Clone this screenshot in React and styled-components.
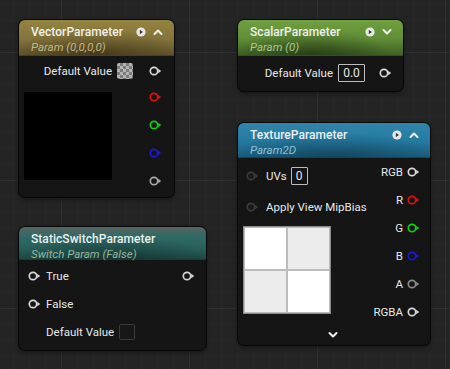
import React from "react";
import styled, { createGlobalStyle } from "styled-components";

const GlobalStyle = createGlobalStyle`
	html, body {
		margin: 0;
		padding: 0;
		background: #242424;
	}
	* {
		box-sizing: border-box;
	}
`;

const Pin = ({ color = "#d8d8d8", dim = false }) => (
	<PinSvg width="14" height="10" viewBox="0 0 14 10">
		<circle
			cx="5"
			cy="5"
			r="3.7"
			fill={dim ? "#1a1a1a" : "none"}
			stroke={color}
			strokeWidth="1.7"
		/>
		<polygon points="9.2,2.8 12.2,5 9.2,7.2" fill={color} />
	</PinSvg>
);

const PlayIcon = () => (
	<svg width="10" height="10" viewBox="0 0 10 10">
		<circle cx="5" cy="5" r="4.6" fill="#e8e8e8" />
		<polygon points="3.8,2.8 7,5 3.8,7.2" fill="#3a3a3a" />
	</svg>
);

const Chevron = ({ up }) => (
	<svg width="10" height="8" viewBox="0 0 10 8">
		<polyline
			points={up ? "1.5,6 5,2.5 8.5,6" : "1.5,2 5,5.5 8.5,2"}
			fill="none"
			stroke="#f0f0f0"
			strokeWidth="2"
			strokeLinecap="round"
			strokeLinejoin="round"
		/>
	</svg>
);

const Header = ({ title, sub, variant, icons, up }) => (
	<StHeader $variant={variant}>
		<StTitleRow>
			<StTitle>{title}</StTitle>
			{icons && (
				<StHeaderIcons>
					<PlayIcon />
					<Chevron up={up} />
				</StHeaderIcons>
			)}
		</StTitleRow>
		<StSub $variant={variant}>{sub}</StSub>
	</StHeader>
);

const App = () => {
	return (
		<StCanvas>
			<GlobalStyle />

			<StNode $x={19} $y={20} $w={155} $h={177}>
				<Header title="VectorParameter" sub="Param (0,0,0,0)" variant="vector" icons up />
				<StBody>
					<StRow $h={24} $justify="flex-end" $pr={11}>
						<StLabel>Default Value</StLabel>
						<StSwatch />
						<StPinGap />
						<Pin />
					</StRow>
					<StSplit>
						<StPreview />
						<StPinColumn $pr={11}>
							<StPinRow $h={28}><Pin color="#e01010" /></StPinRow>
							<StPinRow $h={28}><Pin color="#10d010" /></StPinRow>
							<StPinRow $h={28}><Pin color="#1818e0" /></StPinRow>
							<StPinRow $h={28}><Pin color="#a8a8a8" /></StPinRow>
						</StPinColumn>
					</StSplit>
				</StBody>
			</StNode>

			<StNode $x={238} $y={20} $w={165} $h={71}>
				<Header title="ScalarParameter" sub="Param (0)" variant="scalar" icons />
				<StBody>
					<StRow $h={28} $justify="flex-end" $pr={10}>
						<StLabel>Default Value</StLabel>
						<StValueBox $w={27}>0.0</StValueBox>
						<StPinGap $w={14} />
						<Pin />
					</StRow>
				</StBody>
			</StNode>

			<StNode $x={238} $y={123} $w={192} $h={222}>
				<Header title="TextureParameter" sub="Param2D" variant="texture" icons up />
				<StSplit>
					<StInputs>
						<StRow $h={31} $pl={8}>
							<Pin color="#3c3c3c" dim />
							<StLabel $ml={6}>UVs</StLabel>
							<StValueBox $w={17} $ml={4}>0</StValueBox>
						</StRow>
						<StRow $h={31} $pl={8}>
							<Pin color="#3c3c3c" dim />
							<StLabel $ml={6}>Apply View MipBias</StLabel>
						</StRow>
						<StTexPreview>
							<StTexCell $light />
							<StTexCell />
							<StTexCell />
							<StTexCell $light />
						</StTexPreview>
					</StInputs>
					<StPinColumn $pr={9}>
						<StPinRow $h={28}><StLabel>RGB</StLabel><Pin /></StPinRow>
						<StPinRow $h={28}><StLabel>R</StLabel><Pin color="#e01010" /></StPinRow>
						<StPinRow $h={28}><StLabel>G</StLabel><Pin color="#10d010" /></StPinRow>
						<StPinRow $h={28}><StLabel>B</StLabel><Pin color="#1818e0" /></StPinRow>
						<StPinRow $h={28}><StLabel>A</StLabel><Pin color="#8c8c8c" /></StPinRow>
						<StPinRow $h={28}><StLabel>RGBA</StLabel><Pin /></StPinRow>
					</StPinColumn>
				</StSplit>
				<StFooter>
					<Chevron />
				</StFooter>
			</StNode>

			<StNode $x={19} $y={227} $w={187} $h={123}>
				<Header title="StaticSwitchParameter" sub="Switch Param (False)" variant="switch" />
				<StBody $pt={2}>
					<StRow $h={28} $pl={9} $pr={10}>
						<Pin />
						<StLabel $ml={4}>True</StLabel>
						<StSpacer />
						<Pin />
					</StRow>
					<StRow $h={28} $pl={9}>
						<Pin />
						<StLabel $ml={4}>False</StLabel>
					</StRow>
					<StRow $h={28} $pl={27}>
						<StLabel>Default Value</StLabel>
						<StCheckbox />
					</StRow>
				</StBody>
			</StNode>
		</StCanvas>
	);
};

export default App;

const headerBg = {
	vector:
		"radial-gradient(ellipse 70% 90% at 50% 100%, rgba(30,24,10,0.45), rgba(30,24,10,0) 80%), linear-gradient(180deg, #94843f 0%, #84733a 55%, #62552b 100%)",
	scalar:
		"radial-gradient(ellipse 60% 90% at 45% 100%, rgba(20,35,10,0.55), rgba(20,35,10,0) 80%), linear-gradient(180deg, #70a040 0%, #608c36 55%, #3f6025 100%)",
	texture:
		"radial-gradient(ellipse 70% 90% at 50% 100%, rgba(10,30,45,0.4), rgba(10,30,45,0) 80%), linear-gradient(180deg, #2f86aa 0%, #2479a0 55%, #1b5f7e 100%)",
	switch:
		"radial-gradient(ellipse 70% 90% at 50% 100%, rgba(10,30,28,0.5), rgba(10,30,28,0) 80%), linear-gradient(180deg, #5a6462 0%, #2f6a66 30%, #28605b 70%, #1f4a46 100%)",
};

const subColor = {
	vector: "#d6c698",
	scalar: "#bcdca0",
	texture: "#a3d3e6",
	switch: "#adc8b0",
};

const StCanvas = styled.div`
	position: relative;
	width: 450px;
	height: 369px;
	overflow: hidden;
	font-family: Roboto, "Liberation Sans", sans-serif;
	background-color: #242424;
	background-image:
		linear-gradient(rgba(255, 255, 255, 0.035) 1px, transparent 1px),
		linear-gradient(90deg, rgba(255, 255, 255, 0.035) 1px, transparent 1px),
		linear-gradient(rgba(255, 255, 255, 0.012) 1px, transparent 1px),
		linear-gradient(90deg, rgba(255, 255, 255, 0.012) 1px, transparent 1px);
	background-size: 128px 128px, 128px 128px, 16px 16px, 16px 16px;
	background-position: -10px 52px, 61px -10px, -10px 4px, 13px -10px;
`;

const StNode = styled.div`
	position: absolute;
	left: ${(p) => p.$x}px;
	top: ${(p) => p.$y}px;
	width: ${(p) => p.$w}px;
	height: ${(p) => p.$h}px;
	display: flex;
	flex-direction: column;
	background: #141514;
	border-radius: 6px;
	overflow: hidden;
	box-shadow: 0 0 0 1px rgba(0, 0, 0, 0.7), 0 2px 5px rgba(0, 0, 0, 0.45);
	color: #e8e8e8;
`;

const StHeader = styled.div`
	flex: none;
	height: ${(p) => (p.$variant === "switch" ? 33 : p.$variant === "texture" ? 35 : 36)}px;
	padding: 4px 10px 0 12px;
	background: ${(p) => headerBg[p.$variant]};
	border-bottom: 1px solid rgba(0, 0, 0, 0.5);
`;

const StTitleRow = styled.div`
	display: flex;
	align-items: center;
	height: 14px;
	margin-top: 1px;
`;

const StTitle = styled.div`
	flex: 1;
	font-size: 12px;
	font-weight: 500;
	color: #efefef;
	white-space: nowrap;
	letter-spacing: 0.05px;
`;

const StHeaderIcons = styled.div`
	display: flex;
	align-items: center;
	gap: 7px;
	margin-right: 1px;
`;

const StSub = styled.div`
	font-size: 11.5px;
	font-style: italic;
	color: ${(p) => subColor[p.$variant]};
	opacity: 0.85;
	line-height: 14px;
	margin-top: 1px;
	white-space: nowrap;
`;

const StBody = styled.div`
	display: flex;
	flex-direction: column;
	padding-top: ${(p) => p.$pt ?? 3}px;
`;

const StRow = styled.div`
	display: flex;
	align-items: center;
	justify-content: ${(p) => p.$justify || "flex-start"};
	height: ${(p) => p.$h}px;
	padding-left: ${(p) => p.$pl || 0}px;
	padding-right: ${(p) => p.$pr || 0}px;
`;

const StLabel = styled.span`
	font-size: 11.5px;
	color: #e8e8e8;
	margin-left: ${(p) => p.$ml || 0}px;
	white-space: nowrap;
`;

const StSpacer = styled.div`
	flex: 1;
`;

const StPinGap = styled.div`
	width: ${(p) => p.$w || 16}px;
`;

const PinSvg = styled.svg`
	flex: none;
	display: block;
`;

const StSwatch = styled.div`
	width: 16px;
	height: 16px;
	margin-left: 5px;
	border-radius: 2px;
	background-color: #b4b4b4;
	background-image: conic-gradient(#7c7c7c 25%, #b4b4b4 0 50%, #7c7c7c 0 75%, #b4b4b4 0);
	background-size: 6px 6px;
`;

const StValueBox = styled.div`
	width: ${(p) => p.$w}px;
	height: 18px;
	margin-left: ${(p) => p.$ml ?? 5}px;
	border: 1px solid #bdbdbd;
	border-radius: 1px;
	font-size: 12px;
	line-height: 16px;
	text-align: center;
	color: #e8e8e8;
`;

const StCheckbox = styled.div`
	width: 16px;
	height: 16px;
	margin-left: 5px;
	border: 1px solid #3a3a3a;
	border-radius: 2px;
	background: #171717;
`;

const StSplit = styled.div`
	display: flex;
	justify-content: space-between;
`;

const StPreview = styled.div`
	width: 88px;
	height: 88px;
	margin: 9px 0 0 5px;
	background: #000;
`;

const StPinColumn = styled.div`
	display: flex;
	flex-direction: column;
	padding-right: ${(p) => p.$pr}px;
`;

const StPinRow = styled.div`
	display: flex;
	align-items: center;
	justify-content: flex-end;
	gap: 4px;
	height: ${(p) => p.$h}px;
`;

const StInputs = styled.div`
	display: flex;
	flex-direction: column;
	padding-top: 2px;
`;

const StTexPreview = styled.div`
	display: grid;
	grid-template-columns: 1fr 1fr;
	gap: 2px;
	width: 88px;
	height: 88px;
	margin: 4px 0 0 5px;
	padding: 1px;
	background: #bcbcbc;
	border: 1px solid #8a8a8a;
`;

const StTexCell = styled.div`
	background: ${(p) => (p.$light ? "#ffffff" : "#ececec")};
`;

const StFooter = styled.div`
	flex: 1;
	display: flex;
	align-items: center;
	justify-content: center;
	padding: 0 0 2px 0;
	margin-left: -2px;
`;
